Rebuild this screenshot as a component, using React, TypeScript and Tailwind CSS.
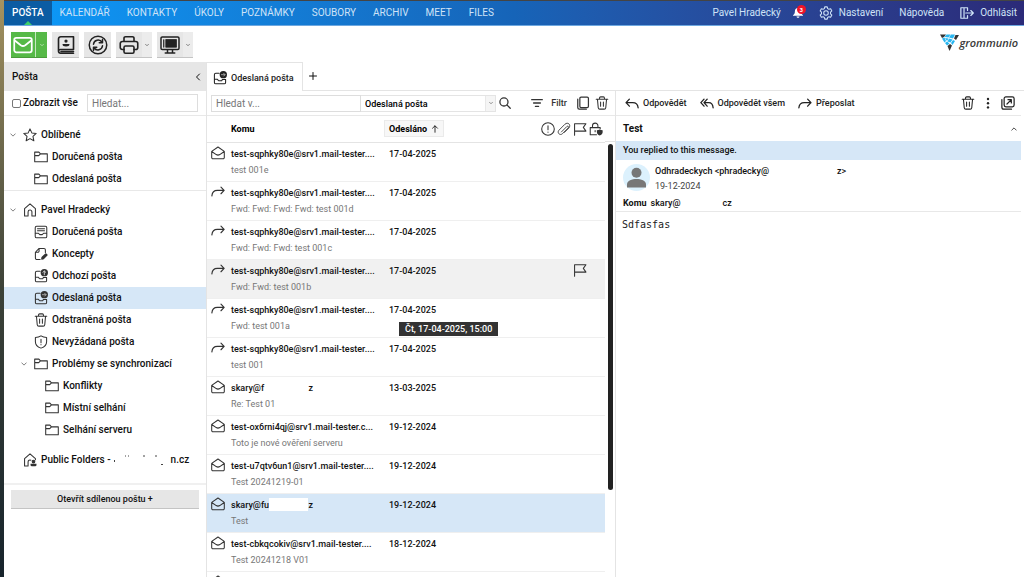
import type { ReactNode } from "react";

type IconProps = { className?: string };

function Icon({ className = "size-4", width = 1.2, children }: IconProps & { width?: number; children: ReactNode }) {
  return (
    <svg
      viewBox="0 0 16 16"
      className={`shrink-0 ${className}`}
      fill="none"
      stroke="currentColor"
      strokeWidth={width}
      strokeLinecap="round"
      strokeLinejoin="round"
      aria-hidden="true"
    >
      {children}
    </svg>
  );
}

const Star = () => (
  <Icon className="size-3.5">
    <path d="M8 1l2.100 4.600 5 .6-3.700 3.400 1 5L8 12.100l-4.400 2.500 1-5L.9 6.200l5-.6z" />
  </Icon>
);
const FolderIcon = () => (
  <Icon className="size-3.5">
    <path d="M.8 13.400V2.400h4.800l1.800 2h7.800v9zM.8 6.400h4.600l2-2" />
  </Icon>
);
const Home = () => (
  <Icon className="size-3.5">
    <path d="M5.800 14.800H1.800V6.400L8 1l6.200 5.400v8.400h-4v-4.600a2.200 2.200 0 00-4.400 0z" />
  </Icon>
);
const PublicHome = () => (
  <Icon className="size-3.5">
    <path d="M5.800 14.800H1.800V6.400L8 1l6.200 5.400v1.400M5.800 14.800v-4.600A2.200 2.200 0 019 8.300" />
    <circle cx="12" cy="9.800" r="1.500" fill="currentColor" />
    <path d="M8.600 12.400h6.800v1.200a1.600 1.600 0 01-1.600 1.600h-3.600a1.600 1.600 0 01-1.600-1.600z" fill="currentColor" stroke="none" />
  </Icon>
);
const Inbox = () => (
  <Icon className="size-3.5">
    <rect x="1.400" y="1.400" width="13.200" height="13.200" rx="1.600" />
    <path d="M4 4.200h8M4 6.600h8M1.600 9.400H5c.6 0 .8 1.600 1.600 1.600h2.800c.8 0 1-1.600 1.600-1.600h3.400" />
  </Icon>
);
const Drafts = () => (
  <Icon className="size-3.5">
    <path d="M7 14.200H3.200a1.600 1.600 0 01-1.600-1.600V6l4.200-4.400h5.600A1.600 1.600 0 0113 3.200v3M5.800 1.800v2.800A1.400 1.400 0 014.400 6H1.800" />
    <path d="M9 13.600l.5-1.800 4-3.800 1.200 1.200-3.900 3.900z" fill="currentColor" strokeWidth="1.800" />
  </Icon>
);
const tray =
  "M7 2.600H3.200a1.600 1.600 0 00-1.600 1.600v8.800a1.600 1.600 0 001.600 1.600h9.600a1.600 1.600 0 001.600-1.600V9.600M1.600 9.400H5c.6 0 .8 1.800 1.600 1.800h2.800c.8 0 1-1.200 1.400-1.600h3.400";
const Outbox = () => (
  <Icon className="size-3.5">
    <path d={tray} />
    <circle cx="11.800" cy="4.200" r="4.200" fill="currentColor" stroke="none" />
    <path d="M11.800 6.600V2.400M10.200 3.800l1.600-1.600 1.600 1.600" stroke="#ddd" strokeWidth="1" />
  </Icon>
);
const Sent = () => (
  <Icon className="size-3.5">
    <path d={tray} />
    <circle cx="11.800" cy="4.200" r="4.200" fill="currentColor" stroke="none" />
    <path d="M9.600 4.200h4M12.200 2.600l1.600 1.600-1.600 1.600" stroke="#bbb" strokeWidth=".9" />
  </Icon>
);
const Trash = () => (
  <Icon className="size-3.5">
    <path d="M1.400 3.600h13.200M5.200 3.400V2.200A1.200 1.200 0 016.400 1h3.200a1.200 1.200 0 011.200 1.200v1.200M2.800 3.800l.9 9.600A1.800 1.800 0 005.500 15h5a1.800 1.800 0 001.800-1.600l.9-9.600M6.400 6.800v5M9.600 6.800v5" />
  </Icon>
);
const Shield = () => (
  <Icon className="size-3.5">
    <path d="M8 1c2 1.300 4 1.800 6.400 1.800v4.800c0 3.400-2.600 6-6.400 7.400-3.800-1.400-6.400-4-6.400-7.400V2.800C4 2.800 6 2.300 8 1zM8 4.800v4M8 11v.2" />
  </Icon>
);
const Chevron = ({ className = "size-2" }: IconProps) => (
  <Icon className={className} width={2}>
    <path d="M2 5l6 6 6-6" />
  </Icon>
);
const Envelope = () => (
  <Icon className="size-3.5">
    <path d="M.8 6.200L8 1.200l7.200 5v7a1.400 1.400 0 01-1.400 1.400H2.200a1.400 1.400 0 01-1.400-1.400zM1.200 6.600L6 9.800q2 1.200 4 0l4.800-3.200" />
  </Icon>
);
const Forward = () => (
  <Icon className="size-3.5" width={1.3}>
    <path d="M1 12.400c.4-4 2.400-6.200 6.200-6.200H15M11.400 2.400L15 6.200l-3.600 3.800" />
  </Icon>
);
const Reply = () => (
  <Icon className="size-3.5" width={1.5}>
    <path d="M15 13.400c-.4-4-2.400-5.800-6.200-5.800H1.200M5 3.600L1.200 7.600 5 11.600" />
  </Icon>
);
const ReplyAll = () => (
  <Icon className="size-3.5" width={1.5}>
    <path d="M15 13.400c-.4-4-2-5.800-5-5.800H4.800M8.200 3.600l-3.600 4 3.600 4M4.600 3.600L1 7.600l3.600 4" />
  </Icon>
);
const ForwardAction = () => (
  <Icon className="size-3.5" width={1.5}>
    <path d="M1 13.400c.4-4 2.400-5.800 6.200-5.800h7.600M11 3.600l3.800 4-3.800 4" />
  </Icon>
);
const Flag = () => (
  <Icon className="size-3.5">
    <path d="M1.800 15V2h13l-3 4.200 3 4.200h-13" />
  </Icon>
);
const Alert = () => (
  <Icon className="size-3.5">
    <circle cx="8" cy="8" r="7.200" />
    <path d="M8 4.200v4.600M8 11.400v.2" />
  </Icon>
);
const Clip = () => (
  <Icon className="size-3.5" width={1}>
    <path d="M5 11.400l6.200-6.200c1.200-1.200 2.800.4 1.600 1.600l-6.600 6.600c-2.800 2.600-6.600-1.200-4-4l6.800-6.800c3.600-3.200 7.400.8 4.600 4.200L8.400 12" />
  </Icon>
);
const Lock = () => (
  <Icon className="size-3.5">
    <path d="M8.600 14.600H1.400V6.400h11.400v1.400M4 6.200V4.400a3.100 3.100 0 016.200 0v1.800M7 9.800v1.400" />
    <path d="M12.200 8.600c1 .6 2 .8 3.400.8v2.400c0 1.800-1.400 3-3.400 3.600-1.800-.6-3.200-1.800-3.200-3.600V9.400c1.200 0 2.200-.2 3.200-.8z" fill="currentColor" stroke="none" />
  </Icon>
);

type FolderItem = { label: string; icon: ReactNode; open?: boolean; depth: number; selected?: boolean };

const favourites: FolderItem[] = [
  { label: "Oblíbené", icon: <Star />, depth: 0, open: true },
  { label: "Doručená pošta", icon: <FolderIcon />, depth: 1 },
  { label: "Odeslaná pošta", icon: <FolderIcon />, depth: 1 },
];

const mailbox: FolderItem[] = [
  { label: "Pavel Hradecký", icon: <Home />, depth: 0, open: true },
  { label: "Doručená pošta", icon: <Inbox />, depth: 1 },
  { label: "Koncepty", icon: <Drafts />, depth: 1 },
  { label: "Odchozí pošta", icon: <Outbox />, depth: 1 },
  { label: "Odeslaná pošta", icon: <Sent />, depth: 1, selected: true },
  { label: "Odstraněná pošta", icon: <Trash />, depth: 1 },
  { label: "Nevyžádaná pošta", icon: <Shield />, depth: 1 },
  { label: "Problémy se synchronizací", icon: <FolderIcon />, depth: 1, open: true },
  { label: "Konflikty", icon: <FolderIcon />, depth: 2 },
  { label: "Místní selhání", icon: <FolderIcon />, depth: 2 },
  { label: "Selhání serveru", icon: <FolderIcon />, depth: 2 },
];

const indent = ["pl-1", "pl-[15px]", "pl-[26px]"];

function Tree({ items }: { items: FolderItem[] }) {
  return (
    <ul>
      {items.map((f, i) => (
        <li key={i}>
          <a
            href="#folder"
            className={`flex h-[22px] items-center ${indent[f.depth]} ${f.selected ? "bg-[#d6e7f7]" : ""}`}
          >
            <span className="mr-1 flex w-[11px] text-[#555]">{f.open && <Chevron className="ml-0.5 size-1.5" />}</span>
            <span className="mr-1 text-[#333]">{f.icon}</span>
            {f.label}
          </a>
        </li>
      ))}
    </ul>
  );
}

type Message = {
  to: string;
  tail?: string;
  subject: string;
  date: string;
  forwarded?: boolean;
  state?: "hover" | "selected";
};

const tester = "test-sqphky80e@srv1.mail-tester....";
const messages: Message[] = [
  { to: tester, subject: "test 001e", date: "17-04-2025" },
  { to: tester, subject: "Fwd: Fwd: Fwd: Fwd: test 001d", date: "17-04-2025", forwarded: true },
  { to: tester, subject: "Fwd: Fwd: Fwd: test 001c", date: "17-04-2025", forwarded: true },
  { to: tester, subject: "Fwd: Fwd: test 001b", date: "17-04-2025", forwarded: true, state: "hover" },
  { to: tester, subject: "Fwd: test 001a", date: "17-04-2025", forwarded: true },
  { to: tester, subject: "test 001", date: "17-04-2025", forwarded: true },
  { to: "skary@f", tail: "z", subject: "Re: Test 01", date: "13-03-2025" },
  { to: "test-ox6rni4qj@srv1.mail-tester.c...", subject: "Toto je nové ověření serveru", date: "19-12-2024" },
  { to: "test-u7qtv6un1@srv1.mail-tester....", subject: "Test 20241219-01", date: "19-12-2024" },
  { to: "skary@fu", tail: "z", subject: "Test", date: "19-12-2024", state: "selected" },
  { to: "test-cbkqcokiv@srv1.mail-tester....", subject: "Test 20241218 V01", date: "18-12-2024" },
  { to: "", subject: "", date: "" },
];

function MessageRow({ m }: { m: Message }) {
  const tone =
    m.state === "hover" ? "bg-[#f1f1f1]" : m.state === "selected" ? "bg-[#d6e7f7]" : "";
  return (
    <tr className={`h-[39px] border-b border-[#efefef] align-top ${tone}`}>
      <td className="pt-[3px] pl-1 text-[#333]">{m.forwarded ? <Forward /> : <Envelope />}</td>
      <td className="pt-[3px]">
        <div className="flex h-4 items-center leading-4 whitespace-nowrap">
          {m.tail ? (
            <span className="flex w-[82px] items-center">
              <span>{m.to}</span>
              <span className={`h-[13px] flex-1 ${m.state === "selected" ? "bg-white" : ""}`} />
              <span>{m.tail}</span>
            </span>
          ) : (
            <span>{m.to}</span>
          )}
        </div>
        <div className="h-4 leading-4 font-normal whitespace-nowrap text-[#777]">{m.subject}</div>
      </td>
      <td className="relative pt-[3px] pl-[5px] leading-4">
        {m.date}
        {m.state === "hover" && (
          <div role="tooltip" className="absolute top-[62px] left-[15px] bg-[#333] px-1.5 leading-[14px] whitespace-nowrap text-white">
            Čt, 17-04-2025, 15:00
          </div>
        )}
      </td>
      <td />
      <td />
      <td className="pt-[3px] text-[#333]">{m.state === "hover" && <Flag />}</td>
      <td />
    </tr>
  );
}

const toolButton = "flex h-[26px] items-center border-b border-[#c4c4c4] bg-[#e6e6e6] text-[#222]";

function Toolbar() {
  return (
    <div className="flex h-9 shrink-0 items-start justify-between pt-1.5 pr-1 pl-[7px]">
      <div className="flex gap-[5px]">
        <button aria-label="Nová zpráva" className="flex h-[26px] items-center border-b border-[#4a9a3b] bg-[#56b947] text-white">
          <span className="flex h-full w-[25px] items-center justify-center border-r border-[#c5e8bf]">
            <Icon className="size-5" width={1.4}>
              <rect x="1" y="2.200" width="14" height="11.600" rx="1.600" />
              <path d="M1.400 4.400l4.800 3.800q1.800 1.200 3.600 0l4.800-3.800" />
            </Icon>
          </span>
          <span className="flex w-[11px] justify-center"><Chevron className="size-1" /></span>
        </button>
        <button aria-label="Adresář" className={`${toolButton} w-[27px] justify-center`}>
          <Icon className="size-5" width={1.3}>
            <path d="M14 11.600V1.400H3.800a1.800 1.800 0 00-1.800 1.800v9.600a1.800 1.800 0 001.800 1.800H14M14 11.600H3.800A1.600 1.600 0 002 13M4 13.200h10" />
            <circle cx="8" cy="4.800" r="1.300" fill="currentColor" stroke="none" />
            <path d="M5.200 7.200h5.600c0 1.400-1 2-2.800 2s-2.800-.6-2.800-2z" fill="currentColor" stroke="none" />
          </Icon>
        </button>
        <button aria-label="Obnovit" className={`${toolButton} w-[27px] justify-center`}>
          <Icon className="size-5" width={1.2}>
            <circle cx="8" cy="8" r="7" />
            <path d="M4.400 7.400a3.700 3.700 0 016.800-1.600M11.600 3.600v2.600H9M11.600 8.600a3.700 3.700 0 01-6.800 1.600M4.400 12.400V9.800H7" />
          </Icon>
        </button>
        <button aria-label="Tisk" className={toolButton}>
          <span className="flex w-[26px] justify-center">
            <Icon className="size-5" width={1.3}>
              <path d="M4 5V2.600a1.200 1.200 0 011.200-1.200h5.600A1.200 1.200 0 0112 2.600V5M4 11.600H2.600A1.600 1.600 0 011 10V6.800a1.600 1.600 0 011.600-1.600h10.800A1.600 1.600 0 0115 6.800V10a1.600 1.600 0 01-1.600 1.600H12" />
              <rect x="4" y="8.800" width="8" height="5.800" rx="1.200" />
            </Icon>
          </span>
          <span className="flex h-full w-2.5 items-center justify-center bg-[#ececec]"><Chevron className="size-1" /></span>
        </button>
        <button aria-label="Zobrazení" className={toolButton}>
          <span className="flex w-[26px] justify-center">
            <Icon className="size-5" width={1.2}>
              <rect x=".8" y="1.600" width="14.400" height="10" rx="1" />
              <path d="M3 3.800v5.800" strokeWidth="1" />
              <path d="M4.800 3.600h8.400v6.200H4.800z" fill="currentColor" strokeWidth=".6" />
              <path d="M6 11.800v2.400M10 11.800v2.400M4.200 14.400h7.600" />
            </Icon>
          </span>
          <span className="flex h-full w-2.5 items-center justify-center bg-[#ececec]"><Chevron className="size-1" /></span>
        </button>
      </div>
      <div className="flex items-center pt-0.5 pr-0.5">
        <svg viewBox="0 0 38 34" className="h-[17px] w-[19px]" aria-hidden="true">
          <path d="M0 1h12l-4 5-4 2z" fill="#333" />
          <path d="M13 1h8l-4 6-8-1zM4 9l5-2 3 7-3 3zM22 1h8l-4 8-8-2z" fill="#29b6f0" />
          <path d="M31 2h7l-6 10-4-3z" fill="#333" />
          <path d="M10 8l7 1-3 5zM18 9l7 2-4 6-6-2zM10 18l4-3 5 4-5 4zM22 18l4-6 4 2-5 8z" fill="#29b6f0" />
          <path d="M15 24l5-4 4 3-5 11z" fill="#333" />
        </svg>
        <span className="font-['Open_Sans',sans-serif] text-[11px] leading-4 font-semibold text-[#3a3a3a] italic">grommunio</span>
      </div>
    </div>
  );
}

const tabs = ["KALENDÁŘ", "KONTAKTY", "ÚKOLY", "POZNÁMKY", "SOUBORY", "ARCHIV", "MEET", "FILES"];

function TopNav() {
  return (
    <nav className="flex h-[25px] shrink-0 items-stretch border-b border-[#6ea8e0] bg-linear-to-r from-[#0a9bfb] via-[#1664b8] to-[#2b2a78] leading-6 font-normal text-[#cfe3f7]">
      <a href="#mail" className="relative bg-[#0b5ca3] px-2 font-medium text-white">
        POŠTA
        <svg viewBox="0 0 8 4" className="absolute bottom-0 left-5 h-1 w-2" aria-hidden="true">
          <path d="M0 4l4-4 4 4z" fill="#3ecf6a" />
        </svg>
      </a>
      <div className="flex gap-px">
        {tabs.map((t) => (
          <a key={t} href="#tab" className="px-2">{t}</a>
        ))}
      </div>
      <div className="ml-auto flex items-center pr-[7px]">
        <span>Pavel Hradecký</span>
        <button aria-label="Oznámení" className="relative ml-3 text-white">
          <svg viewBox="0 0 16 16" className="size-2.5" fill="currentColor" aria-hidden="true">
            <path d="M8 0c3.400 0 5 2.400 5 5.400 0 3 1 4.600 3 6v1H0v-1c2-1.400 3-3 3-6C3 2.400 4.600 0 8 0zM5.600 13.400h4.800c0 3-4.800 3-4.800 0z" />
          </svg>
          <span className="absolute -top-[3px] left-1 flex size-[9px] items-center justify-center rounded-full bg-[#f01428] text-[6px] leading-none font-bold">3</span>
        </button>
        <a href="#settings" className="ml-4 flex items-center gap-1.5">
          <Icon className="size-3.5">
            <circle cx="8" cy="8" r="2.600" />
            <path d="M6.600 1h2.800l.5 2 1.400.8 2-.6 1.400 2.400L13.200 7v2l1.500 1.400-1.400 2.400-2-.6-1.400.8-.5 2H6.600l-.5-2-1.400-.8-2 .6-1.400-2.400L2.800 9V7L1.300 5.600l1.400-2.400 2 .6L6.100 3z" />
          </Icon>
          Nastavení
        </a>
        <a href="#help" className="ml-4">Nápověda</a>
        <a href="#logout" className="ml-4 flex items-center gap-1.5">
          <Icon className="size-3.5" width={1.4}>
            <path d="M8.600 5V2H1v12h7.600v-3M4.600 2v12M6.600 8H15M12.400 5.200L15.200 8l-2.800 2.800" />
          </Icon>
          Odhlásit
        </a>
      </div>
    </nav>
  );
}

function Sidebar() {
  return (
    <aside className="flex w-[202px] shrink-0 flex-col">
      <header className="flex h-[29px] items-center justify-between bg-[#e6e6e6] pr-1 pl-2">
        <h2>Pošta</h2>
        <button aria-label="Sbalit panel"><Chevron className="size-2 rotate-90" /></button>
      </header>
      <div className="flex h-[25px] items-center border-b border-[#e8e8e8] pr-2 pl-2">
        <label className="flex items-center gap-0.5">
          <input type="checkbox" className="size-[9px] appearance-none rounded-xs border border-[#777] bg-white" />
          Zobrazit vše
        </label>
        <input
          aria-label="Hledat složku"
          placeholder="Hledat..."
          className="ml-auto h-[18px] w-[111px] border border-[#ddd] px-1 font-normal placeholder:text-[#777]"
        />
      </div>
      <div className="border-b border-[#e8e8e8] pt-2"><Tree items={favourites} /></div>
      <div className="border-b-2 border-[#f0f0f0] pt-2 pb-3">
        <Tree items={mailbox} />
        <a href="#public" className="mt-2 flex h-[22px] items-center pl-[19px]">
          <span className="mr-1 text-[#333]"><PublicHome /></span>
          <span>Public Folders -</span>
          <svg viewBox="0 0 60 12" className="h-3 w-[60px]" aria-hidden="true">
            <path d="M3.500 6v2M14 2h1M17 2h1M32 2h2M44 2h2M50 10.500h2" stroke="#444" />
          </svg>
          <span>n.cz</span>
        </a>
      </div>
      <button className="mx-[7px] mt-[5px] h-[19px] border-b border-[#c4c4c4] bg-[#e6e6e6] text-center text-[9px]">
        Otevřít sdílenou poštu +
      </button>
    </aside>
  );
}

function MessageList() {
  return (
    <section className="flex w-[410px] shrink-0 flex-col overflow-hidden border-x border-[#e4e4e4]">
      <div className="flex h-[25px] shrink-0 items-center border-b border-[#e8e8e8] pr-1.5 pl-1 text-[#333]">
        <input
          aria-label="Hledat"
          placeholder="Hledat v..."
          className="h-[17px] w-[150px] border border-[#ddd] px-1 text-[10px] font-normal placeholder:text-[#777]"
        />
        <div className="relative">
          <select aria-label="Složka" className="block h-[17px] w-[135px] appearance-none border border-l-0 border-[#e4e4e4] bg-white px-1 text-black">
            <option>Odeslaná pošta</option>
          </select>
          <span className="pointer-events-none absolute inset-y-px right-px flex w-2.5 items-center justify-center border-l border-[#e8e8e8] bg-[#f5f5f5]">
            <Chevron className="size-1" />
          </span>
        </div>
        <button aria-label="Vyhledat" className="ml-[3px]">
          <Icon className="size-3" width={1.7}>
            <circle cx="6.600" cy="6.600" r="5.400" />
            <path d="M10.800 10.800l4.200 4.200" />
          </Icon>
        </button>
        <button className="ml-auto flex items-center gap-2">
          <Icon className="size-3" width={1.9}>
            <path d="M1 3.500h14M3.500 8h9M6 12.500h4" />
          </Icon>
          Filtr
        </button>
        <button aria-label="Kopírovat" className="ml-[9px]">
          <Icon className="size-3.5" width={1.4}>
            <rect x="4.400" y="1.200" width="9.800" height="12" rx="1.400" />
            <path d="M2 3.600v9.600a1.800 1.800 0 001.800 1.800h8" />
          </Icon>
        </button>
        <button aria-label="Smazat" className="ml-[5px]"><Trash /></button>
      </div>
      <div className="flex min-h-0 flex-1">
        <div className="min-w-0 flex-1 overflow-hidden">
          <table className="w-full table-fixed border-collapse">
            <colgroup>
              <col className="w-6" />
              <col className="w-[153px]" />
              <col />
              <col className="w-4" />
              <col className="w-4" />
              <col className="w-4" />
              <col className="w-4" />
            </colgroup>
            <thead>
              <tr className="h-[26px] border-b border-[#e4e4e4] text-left text-[#333]">
                <th />
                <th className="font-bold text-black">Komu</th>
                <th>
                  <button className="flex h-[17px] items-center gap-1 border border-[#eaeaea] bg-[#f7f7f7] px-1 font-bold text-black">
                    Odesláno
                    <Icon className="size-2" width={1.6}>
                      <path d="M8 14.500V2M3 6.500L8 1.500l5 5" />
                    </Icon>
                  </button>
                </th>
                <th aria-label="Důležitost"><Alert /></th>
                <th aria-label="Příloha"><Clip /></th>
                <th aria-label="Příznak"><Flag /></th>
                <th aria-label="Soukromé"><Lock /></th>
              </tr>
            </thead>
            <tbody>
              {messages.map((m, i) => (
                <MessageRow key={i} m={m} />
              ))}
            </tbody>
          </table>
        </div>
        <div className="mt-[25px] w-2.5 shrink-0 border-t border-[#e4e4e4] px-[3px] pt-0.5">
          <div className="h-[80%] w-[5px] rounded-full bg-[#222]" />
        </div>
      </div>
    </section>
  );
}

function Reader() {
  return (
    <article className="flex min-w-0 flex-1 flex-col pr-[3px]">
      <div className="flex h-[25px] items-center border-b border-[#e8e8e8] pr-1.5 pl-[9px] text-[#222]">
        <button className="flex items-center gap-1"><Reply />Odpovědět</button>
        <button className="ml-[13px] flex items-center gap-1"><ReplyAll />Odpovědět všem</button>
        <button className="ml-[13px] flex items-center gap-1"><ForwardAction />Přeposlat</button>
        <button aria-label="Smazat" className="ml-auto"><Trash /></button>
        <button aria-label="Další" className="ml-[7px]">
          <svg viewBox="0 0 12 12" className="size-3" fill="currentColor" aria-hidden="true">
            <circle cx="6" cy="2" r="1.200" /><circle cx="6" cy="6.200" r="1.200" /><circle cx="6" cy="10.400" r="1.200" />
          </svg>
        </button>
        <button aria-label="Otevřít v okně" className="ml-[7px]">
          <Icon className="size-3.5" width={1.4}>
            <rect x="3.600" y="1" width="11.400" height="11.400" rx="2" />
            <path d="M1 4v8.800A2.200 2.200 0 003.200 15H12M6.800 9.200l4.800-4.800M8 4.200h3.800V8" />
          </Icon>
        </button>
      </div>
      <div className="flex h-[25px] items-center justify-between pr-1 pl-[7px]">
        <h1 className="text-[10px] font-bold">Test</h1>
        <button aria-label="Sbalit záhlaví"><Chevron className="size-1.5 rotate-180" /></button>
      </div>
      <p className="h-[19px] bg-[#d6e7f7] pl-[7px] leading-[19px]">You replied to this message.</p>
      <div className="border-b border-[#e8e8e8] pt-1 pl-[7px]">
        <div className="flex gap-[5px]">
          <svg viewBox="0 0 27 27" className="size-[27px]" aria-hidden="true">
            <circle cx="13.500" cy="13.500" r="13.500" fill="#dcf1fd" />
            <circle cx="13.500" cy="8.700" r="5" fill="#777" />
            <path d="M4 23.500v-3c0-4 5-5.500 9.500-5.500s9.500 1.500 9.500 5.500v3z" fill="#777" />
          </svg>
          <div className="leading-[15px]">
            <div className="flex">
              <span>Odhradeckych &lt;phradecky@</span>
              <span className="w-[68px]" />
              <span>z&gt;</span>
            </div>
            <div className="font-normal text-[#444]">19-12-2024</div>
          </div>
        </div>
        <div className="flex h-[17px] items-center leading-4">
          <span className="mr-1 font-bold">Komu</span>
          <span>skary@</span>
          <span className="w-[42px]" />
          <span>cz</span>
        </div>
      </div>
      <p className="pt-[5px] pl-1.5 font-['DejaVu_Sans_Mono',monospace] text-[10px] leading-4 font-normal text-[#222]">Sdfasfas</p>
    </article>
  );
}

export default function App() {
  return (
    <div className="flex h-screen overflow-hidden bg-white font-[Roboto,sans-serif] text-[10px] leading-4 font-medium text-[#111]">
      <div className="w-1 shrink-0 bg-linear-to-b from-[#a5935f] via-[#3c4238] to-[#17242c]" />
      <div className="flex min-w-0 flex-1 flex-col border-t border-[#444]">
        <TopNav />
        <Toolbar />
        <div className="flex min-h-0 flex-1">
          <Sidebar />
          <main className="flex min-w-0 flex-1 flex-col text-[9px]">
            <div className="flex h-[29px] shrink-0 items-stretch">
              <button className="flex items-center gap-1 border border-b-0 border-[#e4e4e4] pt-0.5 pr-2 pl-1.5 text-[#222]">
                <Sent />
                Odeslaná pošta
              </button>
              <div className="flex flex-1 items-center border-b border-[#e4e4e4] pl-1.5">
                <button aria-label="Nová karta">
                  <Icon className="size-2" width={2}>
                    <path d="M8 1v14M1 8h14" />
                  </Icon>
                </button>
              </div>
            </div>
            <div className="flex min-h-0 flex-1">
              <MessageList />
              <Reader />
            </div>
          </main>
        </div>
      </div>
    </div>
  );
}
